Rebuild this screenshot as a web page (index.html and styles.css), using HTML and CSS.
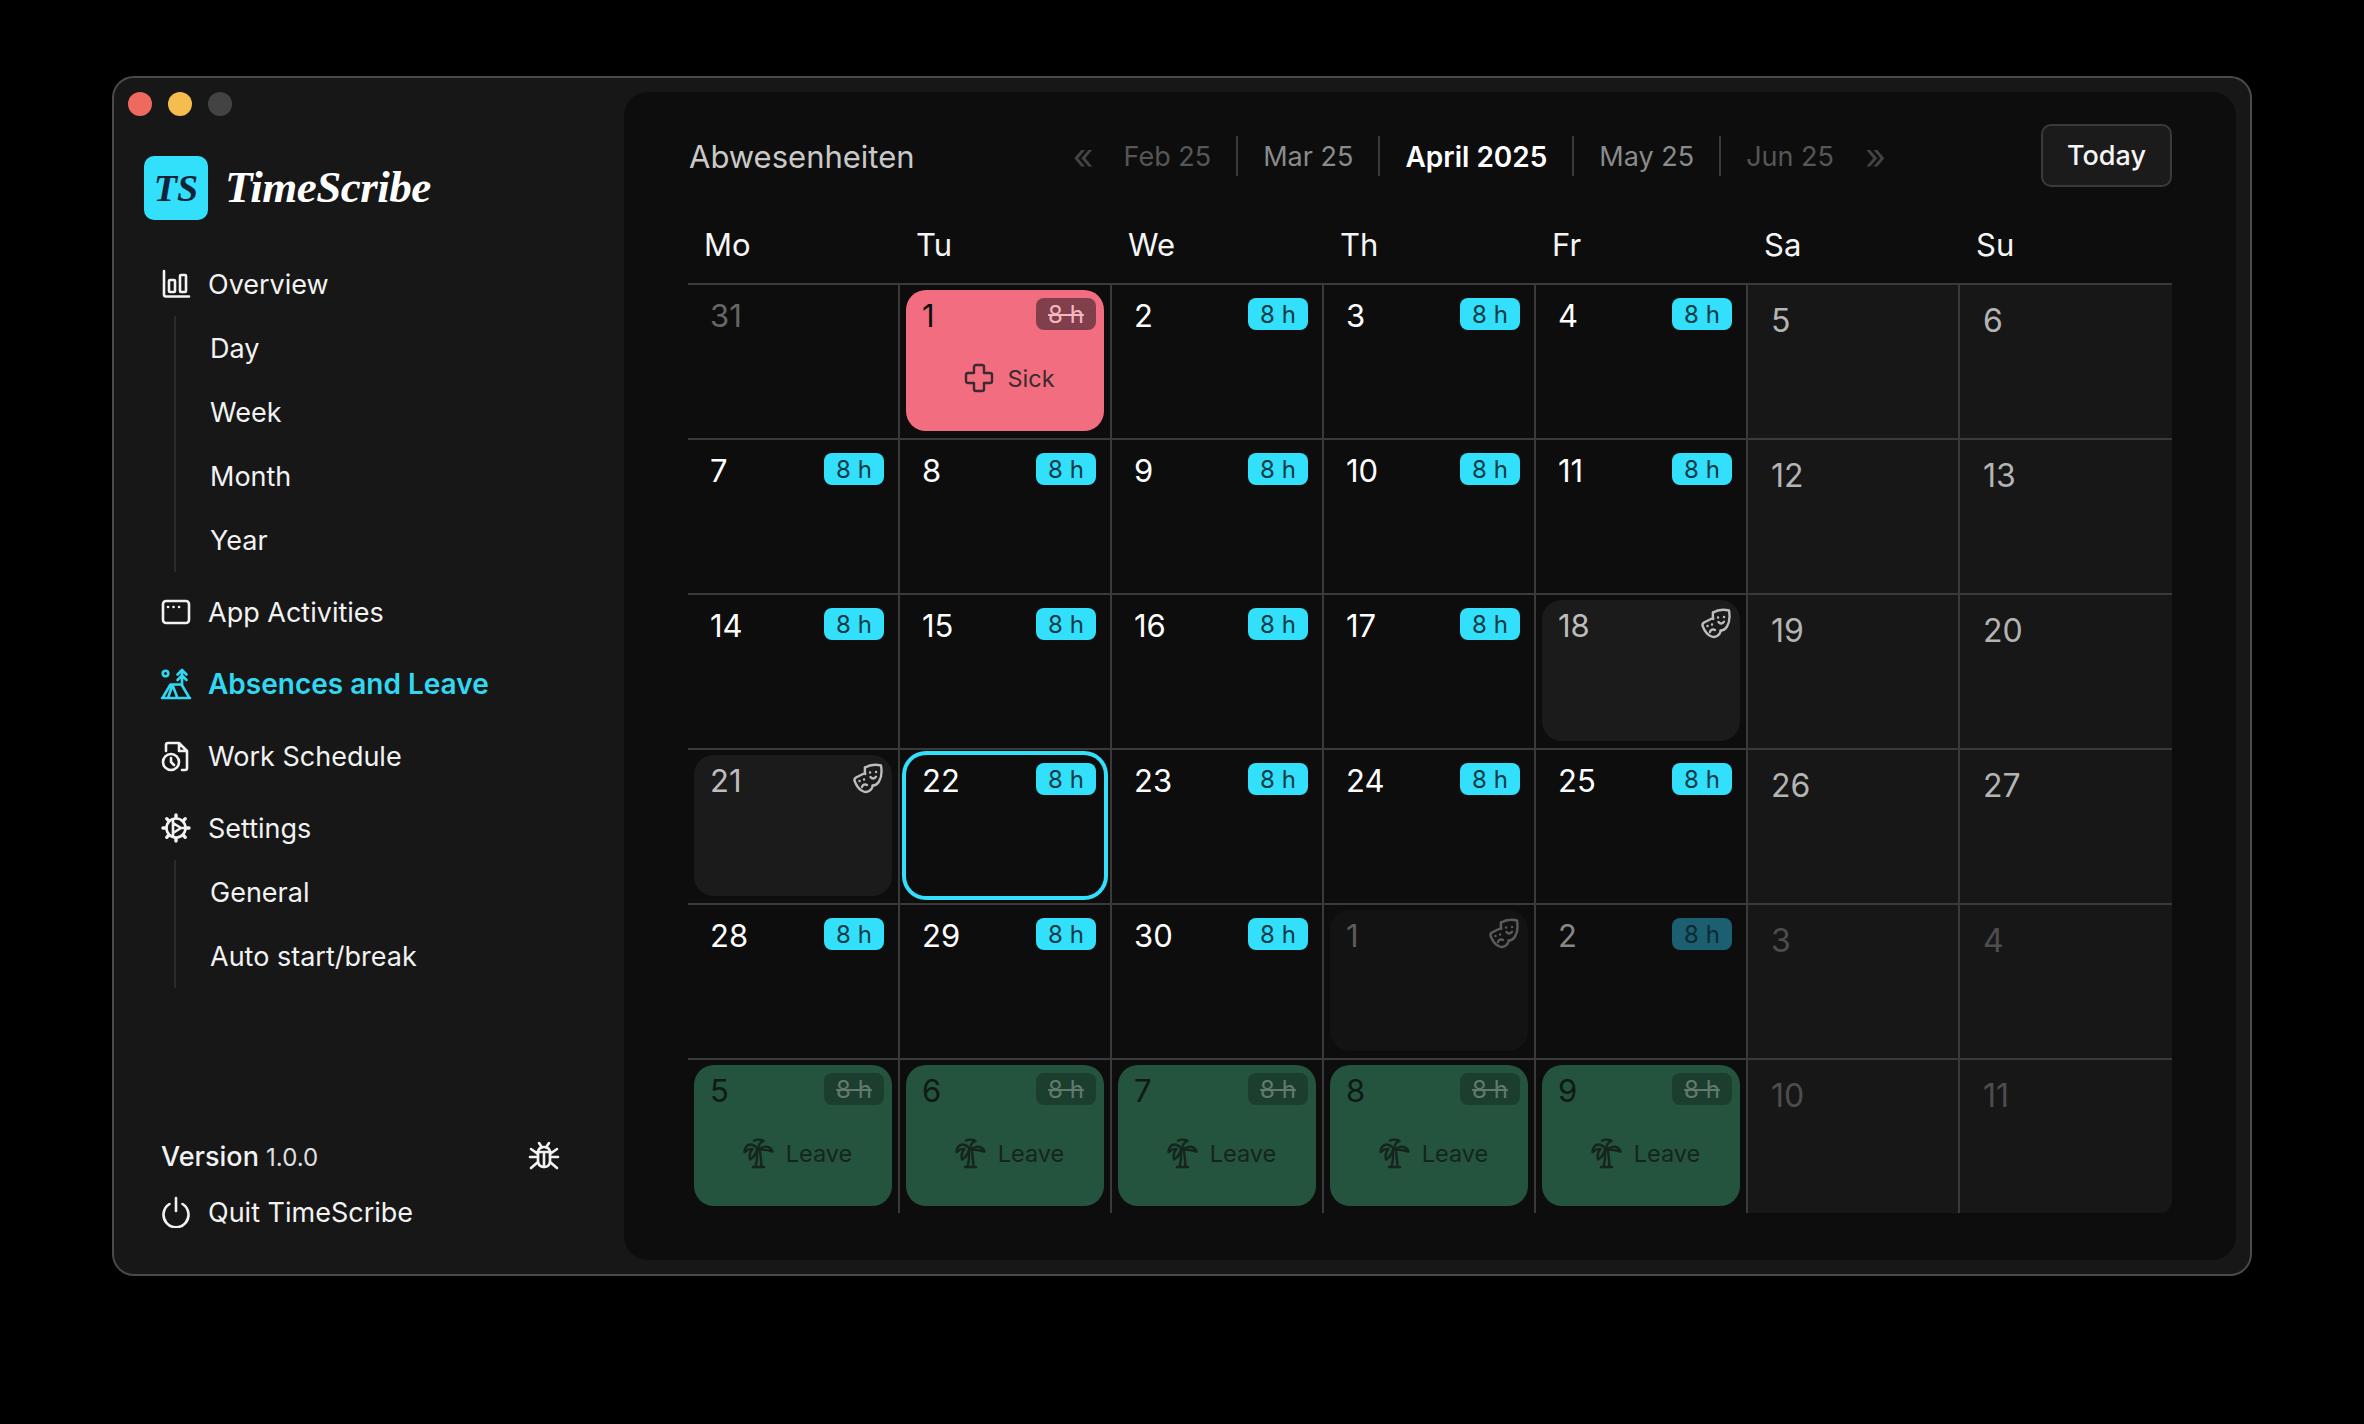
FILE: index.html
```html
<!DOCTYPE html>
<html lang="en">
<head>
    <meta charset="UTF-8">
    <title>TimeScribe</title>
    <link rel="stylesheet" href="styles.css">
</head>
<body>
    <svg class="sprites" width="0" height="0">
        <symbol id="i-mask" viewBox="0 0 32 32">
            <path d="M13 5.500c5-3 10-3.500 16-2 1 6 .5 12-2 16-1.500 2.500-4 4-6.500 4"/>
            <path d="M13 5.500c-.3 2.500-.2 4.500 .2 6.500M12 11.500l-8 4c-1.500 1-2 2-1.300 3.700 1.800 4.500 4.500 8.700 8.800 10.300 4 1.400 8-.8 9.300-5.500"/>
            <path d="M18 10.500h.1M24 10h.1M18.500 15c1.500 2 4 2 5.500-.3M7.500 19h.1M12 17.500h.1M10 25c.5-2.200 3-3.200 5-2"/>
        </symbol>
        <symbol id="i-plus" viewBox="0 0 32 32">
            <path d="M11 5a2 2 0 0 1 2-2h6a2 2 0 0 1 2 2v6h6a2 2 0 0 1 2 2v6a2 2 0 0 1-2 2h-6v6a2 2 0 0 1-2 2h-6a2 2 0 0 1-2-2v-6H5a2 2 0 0 1-2-2v-6a2 2 0 0 1 2-2h6z"/>
        </symbol>
        <symbol id="i-palm" viewBox="0 0 32 32">
            <path d="M11 30h11M13.500 30c1.500-5 1.800-10 1.500-15M19.500 30c-.3-5-.5-10-1.500-15"/>
            <path d="M16 13C13 7 7 6 4 10c-1 1.500-1.500 3-1.500 5 3-2.500 5.500-3.500 8-3-2.500 3-3.500 6.500-2.500 10.500 3-1.500 5.500-5 7-9.500"/>
            <path d="M16 13c0-5 3-9 5.500-9-1.500-1.500-6-2-9.500-.5M17 12.500c3.500-3 8-3.500 11-1.500 1.300 1 2 2 2.500 3.500-4.500-1.500-9-2-13.500-2z"/>
        </symbol>
    </svg>

    <div class="window">
        <aside class="sidebar">
            <div class="lights">
                <span class="light red"></span>
                <span class="light yellow"></span>
                <span class="light grey"></span>
            </div>

            <div class="brand">
                <div class="brand-mark">TS</div>
                <div class="brand-name">TimeScribe</div>
            </div>

            <nav class="nav">
                <a class="nav-item">
                    <svg class="icon" viewBox="0 0 32 32"><path d="M4 3v23.500q0 2 2 2h23"/><rect x="9" y="12" width="6" height="12" rx="1"/><rect x="20" y="7" width="6" height="17" rx="1"/></svg>
                    Overview
                </a>
                <div class="sub">
                    <a class="sub-item">Day</a>
                    <a class="sub-item">Week</a>
                    <a class="sub-item">Month</a>
                    <a class="sub-item">Year</a>
                </div>
                <a class="nav-item">
                    <svg class="icon" viewBox="0 0 32 32"><rect x="3" y="5" width="26" height="22" rx="3"/><path class="dots" d="M8 11h.1M13.500 11h.1M19 11h.1"/></svg>
                    App Activities
                </a>
                <a class="nav-item active">
                    <svg class="icon" viewBox="0 0 32 32"><circle cx="5.500" cy="5.500" r="2.800"/><path d="M22 2v15M17.500 6.500 22 2l4.500 4.500M17.500 12 22 7.500l4.500 4.500"/><path d="M2 30h28M2.500 30l8-13.500h11L29.500 30M12.500 17 8 30M12.500 17l5 13"/></svg>
                    Absences and Leave
                </a>
                <a class="nav-item">
                    <svg class="icon" viewBox="0 0 32 32"><path d="M6 11V5q0-2 2-2h11l8 8v17q0 2-2 2h-3M19 3v8h8"/><circle cx="11" cy="22" r="8"/><path d="M11 18v4l3 3"/></svg>
                    Work Schedule
                </a>
                <a class="nav-item">
                    <svg class="icon" viewBox="0 0 32 32"><circle cx="16" cy="16" r="9.500"/><path class="teeth" d="M16 3v2.500M16 26.500V29M3 16h2.500M26.500 16H29M6.800 6.800l1.800 1.800M23.400 23.400l1.800 1.800M25.200 6.800l-1.800 1.800M8.600 23.400l-1.800 1.800"/><path d="M13 7.500v17M13 11l8 5-8 5M21 16h4.500"/></svg>
                    Settings
                </a>
                <div class="sub">
                    <a class="sub-item">General</a>
                    <a class="sub-item">Auto start/break</a>
                </div>
            </nav>

            <div class="side-foot">
                <div class="version">
                    <span>Version <small>1.0.0</small></span>
                    <svg class="icon" viewBox="0 0 32 32"><path d="M10 13c0-4 2.500-6 6-6s6 2 6 6v8c0 4-2.500 6-6 6s-6-2-6-6z"/><path d="M9 12h14M16 14v13M11 3l3 4.500M21 3l-3 4.500M3 9l7 5M29 9l-7 5M2 17h8M30 17h-8M3 28l7-6M29 28l-7-6"/></svg>
                </div>
                <a class="nav-item">
                    <svg class="icon" viewBox="0 0 32 32"><path d="M9.500 8a12.500 12.500 0 1 0 13 0M16 2v13"/></svg>
                    Quit TimeScribe
                </a>
            </div>
        </aside>

        <main class="panel">
            <header class="head">
                <h1 class="title">Abwesenheiten</h1>
                <div class="months">
                    <span class="arrow">«</span>
                    <span class="month far">Feb 25</span>
                    <span class="month near">Mar 25</span>
                    <span class="month current">April 2025</span>
                    <span class="month near">May 25</span>
                    <span class="month far">Jun 25</span>
                    <span class="arrow">»</span>
                </div>
                <button class="today-btn">Today</button>
            </header>

            <div class="weekdays">
                <div>Mo</div><div>Tu</div><div>We</div><div>Th</div><div>Fr</div><div>Sa</div><div>Su</div>
            </div>

            <div class="grid">
                <div class="cell"><div class="day dim"><div class="day-top"><span class="num">31</span></div></div></div>
                <div class="cell"><div class="day sick"><div class="day-top"><span class="num">1</span><span class="badge off">8 h</span></div><div class="day-label"><svg class="tag-icon"><use href="#i-plus"/></svg>Sick</div></div></div>
                <div class="cell"><div class="day"><div class="day-top"><span class="num">2</span><span class="badge">8 h</span></div></div></div>
                <div class="cell"><div class="day"><div class="day-top"><span class="num">3</span><span class="badge">8 h</span></div></div></div>
                <div class="cell"><div class="day"><div class="day-top"><span class="num">4</span><span class="badge">8 h</span></div></div></div>
                <div class="cell weekend"><span class="num">5</span></div>
                <div class="cell weekend"><span class="num">6</span></div>

                <div class="cell"><div class="day"><div class="day-top"><span class="num">7</span><span class="badge">8 h</span></div></div></div>
                <div class="cell"><div class="day"><div class="day-top"><span class="num">8</span><span class="badge">8 h</span></div></div></div>
                <div class="cell"><div class="day"><div class="day-top"><span class="num">9</span><span class="badge">8 h</span></div></div></div>
                <div class="cell"><div class="day"><div class="day-top"><span class="num">10</span><span class="badge">8 h</span></div></div></div>
                <div class="cell"><div class="day"><div class="day-top"><span class="num">11</span><span class="badge">8 h</span></div></div></div>
                <div class="cell weekend"><span class="num">12</span></div>
                <div class="cell weekend"><span class="num">13</span></div>

                <div class="cell"><div class="day"><div class="day-top"><span class="num">14</span><span class="badge">8 h</span></div></div></div>
                <div class="cell"><div class="day"><div class="day-top"><span class="num">15</span><span class="badge">8 h</span></div></div></div>
                <div class="cell"><div class="day"><div class="day-top"><span class="num">16</span><span class="badge">8 h</span></div></div></div>
                <div class="cell"><div class="day"><div class="day-top"><span class="num">17</span><span class="badge">8 h</span></div></div></div>
                <div class="cell"><div class="day holiday"><div class="day-top"><span class="num">18</span><svg class="mask"><use href="#i-mask"/></svg></div></div></div>
                <div class="cell weekend"><span class="num">19</span></div>
                <div class="cell weekend"><span class="num">20</span></div>

                <div class="cell"><div class="day holiday"><div class="day-top"><span class="num">21</span><svg class="mask"><use href="#i-mask"/></svg></div></div></div>
                <div class="cell"><div class="day today"><div class="day-top"><span class="num">22</span><span class="badge">8 h</span></div></div></div>
                <div class="cell"><div class="day"><div class="day-top"><span class="num">23</span><span class="badge">8 h</span></div></div></div>
                <div class="cell"><div class="day"><div class="day-top"><span class="num">24</span><span class="badge">8 h</span></div></div></div>
                <div class="cell"><div class="day"><div class="day-top"><span class="num">25</span><span class="badge">8 h</span></div></div></div>
                <div class="cell weekend"><span class="num">26</span></div>
                <div class="cell weekend"><span class="num">27</span></div>

                <div class="cell"><div class="day"><div class="day-top"><span class="num">28</span><span class="badge">8 h</span></div></div></div>
                <div class="cell"><div class="day"><div class="day-top"><span class="num">29</span><span class="badge">8 h</span></div></div></div>
                <div class="cell"><div class="day"><div class="day-top"><span class="num">30</span><span class="badge">8 h</span></div></div></div>
                <div class="cell"><div class="day holiday next"><div class="day-top"><span class="num">1</span><svg class="mask"><use href="#i-mask"/></svg></div></div></div>
                <div class="cell"><div class="day next"><div class="day-top"><span class="num">2</span><span class="badge">8 h</span></div></div></div>
                <div class="cell weekend next"><span class="num">3</span></div>
                <div class="cell weekend next"><span class="num">4</span></div>

                <div class="cell"><div class="day leave"><div class="day-top"><span class="num">5</span><span class="badge off">8 h</span></div><div class="day-label"><svg class="tag-icon"><use href="#i-palm"/></svg>Leave</div></div></div>
                <div class="cell"><div class="day leave"><div class="day-top"><span class="num">6</span><span class="badge off">8 h</span></div><div class="day-label"><svg class="tag-icon"><use href="#i-palm"/></svg>Leave</div></div></div>
                <div class="cell"><div class="day leave"><div class="day-top"><span class="num">7</span><span class="badge off">8 h</span></div><div class="day-label"><svg class="tag-icon"><use href="#i-palm"/></svg>Leave</div></div></div>
                <div class="cell"><div class="day leave"><div class="day-top"><span class="num">8</span><span class="badge off">8 h</span></div><div class="day-label"><svg class="tag-icon"><use href="#i-palm"/></svg>Leave</div></div></div>
                <div class="cell"><div class="day leave"><div class="day-top"><span class="num">9</span><span class="badge off">8 h</span></div><div class="day-label"><svg class="tag-icon"><use href="#i-palm"/></svg>Leave</div></div></div>
                <div class="cell weekend next"><span class="num">10</span></div>
                <div class="cell weekend next"><span class="num">11</span></div>
            </div>
        </main>
    </div>
</body>
</html>
```

FILE: styles.css
```css
* {
    box-sizing: border-box;
}

body {
    margin: 0;
    padding: 76px 0 0 112px;
    min-height: 100vh;
    background-color: #000;
    font-family: Inter, "Noto Sans", sans-serif;
    color: #f2f2f2;
}

.sprites {
    position: absolute;
}

.window {
    display: flex;
    width: 2140px;
    height: 1200px;
    background-color: #171717;
    border: 2px solid #4a4a4a;
    border-radius: 22px;
}

/* sidebar */

.sidebar {
    display: flex;
    flex-direction: column;
    width: 510px;
    flex-shrink: 0;
}

.lights {
    display: flex;
    gap: 16px;
    padding: 14px 0 0 14px;
}

.light {
    width: 24px;
    height: 24px;
    border-radius: 50%;
}

.light.red { background-color: #ee6a5f; }
.light.yellow { background-color: #f5bd4f; }
.light.grey { background-color: #434343; }

.brand {
    display: flex;
    align-items: center;
    gap: 17px;
    margin: 40px 0 16px 30px;
}

.brand-mark {
    display: flex;
    align-items: center;
    justify-content: center;
    width: 64px;
    height: 64px;
    background-color: #32e0fb;
    border-radius: 10px;
    font-family: "Liberation Serif", serif;
    font-style: italic;
    font-weight: 700;
    font-size: 38px;
    color: #10233a;
}

.brand-name {
    padding-bottom: 3px;
    font-family: "Liberation Serif", serif;
    font-style: italic;
    font-weight: 700;
    font-size: 45px;
    letter-spacing: -0.5px;
    color: #fff;
}

.nav {
    display: flex;
    flex-direction: column;
    padding-left: 46px;
}

.nav-item {
    display: flex;
    align-items: center;
    gap: 16px;
    height: 48px;
    margin-top: 24px;
    font-size: 27px;
    color: #f2f2f2;
}

.nav-item.active {
    color: #32d8f2;
    font-size: 28px;
    font-weight: 600;
}

.icon {
    width: 32px;
    height: 32px;
    flex-shrink: 0;
    fill: none;
    stroke: currentColor;
    stroke-width: 2.600;
    stroke-linecap: round;
    stroke-linejoin: round;
}

.icon .dots {
    stroke-width: 2.600;
}

.icon .teeth {
    stroke-width: 3.400;
}

.sub {
    display: flex;
    flex-direction: column;
    margin: 8px 0 0 14px;
    padding-left: 34px;
    border-left: 2px solid #2b2b2b;
}

.sub + .nav-item {
    margin-top: 16px;
}

.sub-item {
    display: flex;
    align-items: center;
    height: 64px;
    font-size: 27px;
    color: #f2f2f2;
}

.side-foot {
    margin-top: auto;
    padding: 0 0 38px 46px;
}

.side-foot .nav-item {
    margin-top: 8px;
}

.version {
    display: flex;
    align-items: center;
    justify-content: space-between;
    width: 400px;
    height: 48px;
    padding-left: 1px;
    font-size: 27px;
    font-weight: 500;
}

.version small {
    font-size: 24px;
    font-weight: 400;
    color: #e0e0e0;
}

/* main panel */

.panel {
    flex: 1;
    margin: 14px 14px 14px 0;
    padding: 32px 64px 0;
    background-color: #0d0d0d;
    border-radius: 24px;
}

.head {
    display: flex;
    align-items: center;
    justify-content: space-between;
    height: 63px;
    margin-bottom: 28px;
}

.title {
    margin: 2px 0 0 1px;
    font-size: 31px;
    font-weight: 400;
    color: #c9c9c9;
}

.months {
    display: flex;
    align-items: center;
    margin-left: 2px;
    font-size: 27px;
}

.arrow {
    width: 20px;
    font-size: 36px;
    line-height: 40px;
    text-align: center;
    color: #444;
}

.arrow:first-child {
    margin-right: 6px;
}

.arrow:last-child {
    margin-left: 6px;
}

.month {
    display: flex;
    align-items: center;
    height: 40px;
    padding: 2px 25px 0;
    border-right: 2px solid #3a3a3a;
}

.month.far { color: #565656; }
.month.near { color: #8a8a8a; }
.month.current { color: #fff; font-size: 28px; font-weight: 600; }

.month:nth-child(6) {
    border-right: none;
}

.today-btn {
    width: 131px;
    height: 63px;
    padding: 0;
    background-color: #1b1b1b;
    border: 2px solid #3a3a3a;
    border-radius: 10px;
    font-family: inherit;
    font-size: 27px;
    font-weight: 500;
    color: #f5f5f5;
}

.weekdays {
    display: grid;
    grid-template-columns: repeat(7, 212px);
    height: 68px;
    line-height: 60px;
    font-size: 31px;
    color: #f5f5f5;
}

.weekdays div {
    padding-left: 16px;
}

.grid {
    display: grid;
    grid-template-columns: repeat(7, 212px);
    grid-auto-rows: 155px;
}

.cell {
    border-top: 2px solid #3a3a3a;
    border-right: 2px solid #3a3a3a;
}

.cell:nth-child(7n) {
    border-right: none;
}

.cell:last-child {
    border-bottom-right-radius: 12px;
}

.cell.weekend {
    padding: 14px 0 0 23px;
    background-color: #171717;
}

.weekend .num {
    display: block;
    margin: 0;
    font-size: 32px;
    line-height: 44px;
    color: #b4b4b4;
}

.weekend.next .num {
    color: #4d4d4d;
}

.num {
    margin-top: 3px;
    font-size: 31px;
    line-height: 32px;
    color: #fff;
}

.day {
    display: flex;
    flex-direction: column;
    height: 141px;
    margin: 5px 6px 7px;
    padding: 8px 8px 8px 16px;
    border-radius: 20px;
}

.day-top {
    display: flex;
    align-items: center;
    justify-content: space-between;
    height: 32px;
}

.badge {
    display: flex;
    align-items: center;
    justify-content: center;
    width: 60px;
    height: 32px;
    background-color: #32e0fb;
    border-radius: 8px;
    font-size: 24px;
    color: #0e3b46;
}

.badge.off {
    text-decoration: line-through;
}

.day.dim .num { color: #666; }

.day.sick { background-color: #f26d80; }
.sick .num { color: #0d0d0d; }
.sick .badge { background-color: #803f4a; color: #f6b7c1; }
.sick .day-label { color: #3d2a2e; }

.day.leave { background-color: #24533e; }
.leave .num { color: #0f1a15; }
.leave .badge { background-color: #1c3e2f; color: #607a6c; }
.leave .day-label { color: #15251d; }

.day.holiday { background-color: #1b1b1b; }
.holiday .num { color: #bdbdbd; }

.day.today {
    box-shadow: 0 0 0 4px #32e0fb;
}

.day.next .num { color: #888; }
.day.next .badge { background-color: #1b5f70; color: #0c2a33; }
.day.holiday.next { background-color: #131313; }
.day.holiday.next .num { color: #5c5c5c; }
.day.holiday.next .mask { color: #5c5c5c; }

.mask {
    width: 32px;
    height: 32px;
    margin: -2px 0 0;
    fill: none;
    stroke: currentColor;
    stroke-width: 2.400;
    stroke-linecap: round;
    stroke-linejoin: round;
    color: #bdbdbd;
}

.day-label {
    display: flex;
    align-items: center;
    justify-content: center;
    gap: 12px;
    margin-top: 32px;
    height: 32px;
    font-size: 23.500px;
}

.tag-icon {
    width: 32px;
    height: 32px;
    fill: none;
    stroke: currentColor;
    stroke-width: 2.400;
    stroke-linecap: round;
    stroke-linejoin: round;
}
```
